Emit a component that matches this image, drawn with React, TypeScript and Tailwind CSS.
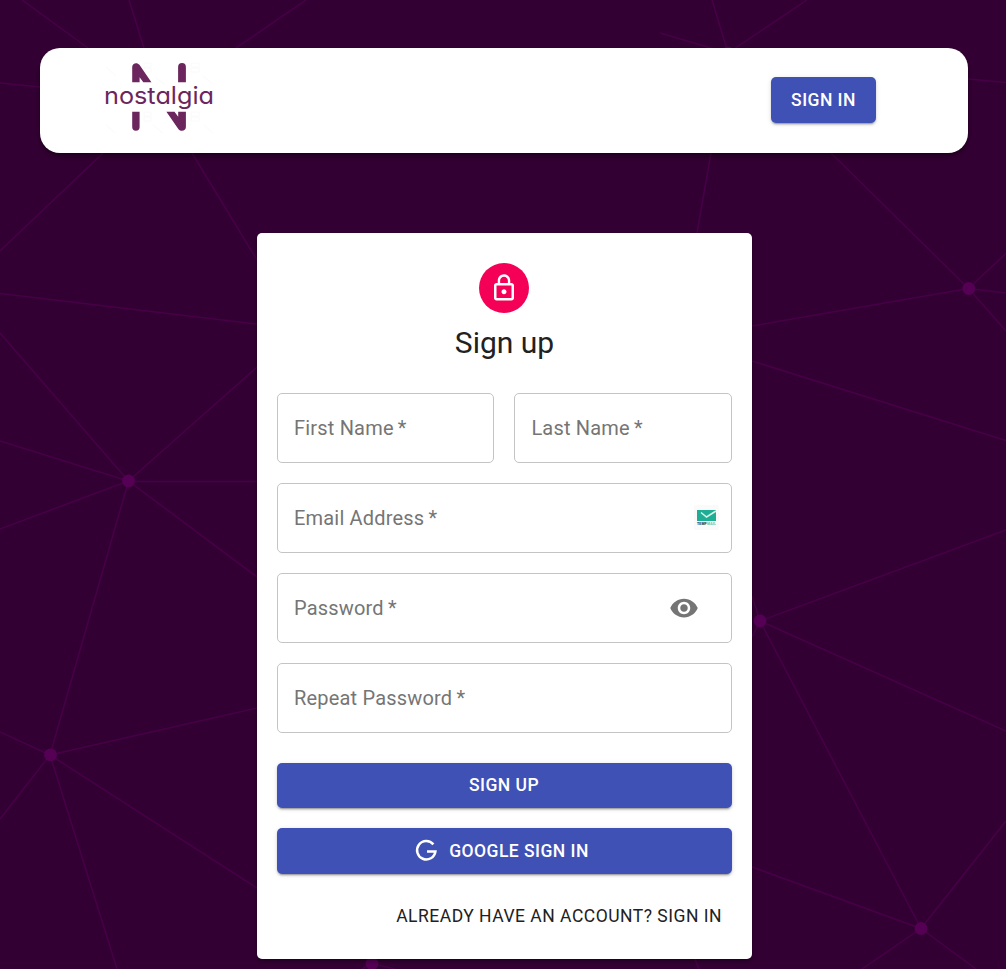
import React from "react";

const nodes = [
  [128.5, 481],
  [50.5, 754.8],
  [968.8, 288.5],
  [760, 621],
  [921, 928.5],
  [372, 963.5],
  [728, 53],
];

const lines = [
  [22, 0, 88, 48], [129, 0, 144, 48], [306, 0, 236, 48], [0, 83, 40, 87],
  [103, 153, 0, 251], [192, 153, 257, 260], [0, 293.5, 257, 324],
  [0, 333, 128.5, 481], [0, 441, 128.5, 481], [0, 529, 128.5, 481],
  [257, 367, 128.5, 481], [257, 481.5, 128.5, 481.5], [257, 577, 128.5, 481],
  [128.5, 481, 50, 755], [0, 732, 50, 755], [257, 708, 50, 755],
  [0, 819, 50, 755], [117, 969, 50, 755], [257, 888, 50, 755],
  [362, 969, 372, 963.5], [395, 969, 372, 963.5],
  [660, 33, 728, 53], [712, 0, 728, 53], [807, 0, 728, 53],
  [711, 153, 697, 233], [831, 153, 968.5, 288.5], [968, 79, 1006, 82.5],
  [1006, 253.5, 968.5, 288.5], [1006, 293, 968.5, 288.5], [1006, 331, 968.5, 288.5],
  [752, 326, 968.5, 288.5], [752, 361, 1006, 440.5], [1006, 530, 760, 621],
  [752, 596, 760, 621], [752, 637, 760, 621], [1006, 731, 760, 621],
  [760, 621, 921, 928.5], [752, 867, 921, 928.5], [1006, 821, 921, 928.5],
  [862, 969, 921, 928.5], [976, 969, 921, 928.5], [695, 959, 699, 969],
];

const raised =
  "shadow-[0_3px_1px_-2px_rgba(0,0,0,0.2),0_2px_2px_0_rgba(0,0,0,0.14),0_1px_5px_0_rgba(0,0,0,0.12)]";
const button = `flex items-center justify-center rounded-[5px] bg-[#3f51b5] text-[17.5px] leading-[30.6px] font-medium tracking-[0.026em] text-white uppercase ${raised}`;

function Network() {
  return (
    <svg className="absolute inset-0" width="1006" height="969" aria-hidden="true">
      {lines.map(([x1, y1, x2, y2], i) => (
        <line key={i} x1={x1} y1={y1} x2={x2} y2={y2} stroke="#470047" strokeWidth="1.5" />
      ))}
      {nodes.map(([cx, cy], i) => (
        <circle key={i} cx={cx} cy={cy} r="6.4" fill="#550055" />
      ))}
    </svg>
  );
}

function Logo() {
  return (
    <svg className="overflow-visible" width="124" height="80" viewBox="98 58 124 80">
      <g stroke="#fafafa" strokeWidth="1" fill="none">
        <path d="M106 67l10 9M155 77l10 8M203 76l10 8M106 125l9 8M153 125l10 8M204 125l9 8" />
        <path d="M144 63h7v4h-7zM144 68h7v4h-7zM191 63h8v4h-8zM191 68h8v4h-8zM144 112h7v4h-7zM144 117h7v4h-7zM191 112h8v4h-8zM191 117h8v4h-8z" />
      </g>
      <g fill="#6b265e">
        <path d="M132.2 82.3V67c0-4 5-5 7.2-2.2L151.4 82.3H143.3L139.6 77.3V82.3Z" />
        <path d="M178.1 82.3V67a3.9 3.9 0 0 1 7.8 0V82.3Z" />
        <path d="M132.2 111.7V127a3.7 3.7 0 0 0 7.4 0V111.7Z" />
        <path d="M166.4 111.7H174.5L178.2 116.7V111.7H185.9V127c0 4-5 5-7.4 2.2Z" />
      </g>
      <text
        x="104"
        y="103.5"
        textLength="110"
        lengthAdjust="spacingAndGlyphs"
        fill="#6b265e"
        className="font-['Inter',sans-serif] text-[24px] font-normal [font-feature-settings:'cv11','ss03']"
      >
        nostalgia
      </text>
    </svg>
  );
}

function Field({ label, children }: { label: string; children?: React.ReactNode }) {
  return (
    <div className="flex h-[70px] w-full items-center justify-between rounded-[5px] border border-[#c4c4c4] pl-4 text-[20px] tracking-[0.00938em] text-[#757575]">
      <span>
        {label}
        <span className="-ml-px">&nbsp;*</span>
      </span>
      {children}
    </div>
  );
}

export default function App() {
  return (
    <div className="relative h-[969px] w-[1006px] overflow-hidden bg-[#330033] font-['Roboto',sans-serif]">
      <Network />
      <div className="relative flex flex-col pt-12">
        <header className="ml-10 flex h-[105px] w-[928px] items-start justify-between rounded-[20px] bg-white pr-[92px] pl-[58px] shadow-[0_3px_4px_-1px_rgba(0,0,0,0.3),0_4px_6px_rgba(0,0,0,0.2)]">
          <div className="pt-[10px]">
            <Logo />
          </div>
          <button className={`${button} mt-[29px] h-[46px] w-[105px]`}>Sign in</button>
        </header>

        <main className="mt-20 ml-[257px] flex h-[726px] w-[495px] flex-col rounded-[5px] bg-white px-5 pt-[30px] shadow-[0_2px_4px_rgba(0,0,0,0.4)]">
          <div className="flex flex-col items-center">
            <div className="mr-px flex size-[50px] items-center justify-center rounded-full bg-[#f50057]">
              <svg width="30" height="30" viewBox="0 0 24 24" fill="#fff">
                <path d="M12 17c1.1 0 2-.9 2-2s-.9-2-2-2-2 .9-2 2 .9 2 2 2zm6-9h-1V6c0-2.76-2.24-5-5-5S7 3.24 7 6v2H6c-1.1 0-2 .9-2 2v10c0 1.1.9 2 2 2h12c1.1 0 2-.9 2-2V10c0-1.1-.9-2-2-2zM8.9 6c0-1.71 1.39-3.1 3.1-3.1s3.1 1.39 3.1 3.1v2H8.9V6zM18 20H6V10h12v10z" />
              </svg>
            </div>
            <h1 className="mt-[10px] text-[30px] leading-[40px] text-[#212121]">Sign up</h1>
          </div>

          <form className="mt-[30px] flex flex-col gap-5">
            <div className="grid grid-cols-[217.4px_217.6px] gap-5">
              <Field label="First Name" />
              <Field label="Last Name" />
            </div>
            <Field label="Email Address">
              <svg className="mr-3 mb-0.5" width="25" height="25" viewBox="0 0 25 25">
                <rect width="25" height="25" rx="2" fill="#fafafa" />
                <path d="M3 5h19v11H3z" fill="#1fae94" />
                <path d="M7 7.5l5.5 4.5L22 6" fill="none" stroke="#d5f2eb" strokeWidth="1.6" />
                <text x="3" y="19.8" fontSize="3.8" fontWeight="900" textLength="10" lengthAdjust="spacingAndGlyphs" fill="#273336">TEMP</text>
                <text x="13" y="19.8" fontSize="3.8" fontWeight="900" textLength="9" lengthAdjust="spacingAndGlyphs" fill="#55cdb5">MAIL</text>
              </svg>
            </Field>
            <Field label="Password">
              <svg className="mr-8" width="30" height="30" viewBox="0 0 24 24" fill="#757575">
                <path d="M12 4.5C7 4.5 2.73 7.61 1 12c1.73 4.39 6 7.5 11 7.5s9.27-3.11 11-7.5c-1.73-4.39-6-7.5-11-7.5zM12 17c-2.76 0-5-2.24-5-5s2.24-5 5-5 5 2.24 5 5-2.24 5-5 5zm0-8c-1.66 0-3 1.34-3 3s1.34 3 3 3 3-1.34 3-3-1.34-3-3-3z" />
              </svg>
            </Field>
            <Field label="Repeat Password" />
          </form>

          <button className={`${button} mt-[30px] h-[45px] w-full shrink-0 pr-px`}>Sign up</button>
          <button className={`${button} mt-5 h-[46px] w-full shrink-0 pr-[6px]`}>
            <svg className="mr-[10px]" width="25" height="25" viewBox="0 0 25 25" fill="none" stroke="#fff" strokeWidth="2.5">
              <path d="M19.4 5.4A9.2 9.2 0 1 0 21.4 12.6H13" />
            </svg>
            Google sign in
          </button>
          <a className="mt-[27px] mr-[10px] self-end text-[17.5px] leading-[31px] tracking-[0.02857em] text-[#212121] uppercase">
            Already have an account? Sign in
          </a>
        </main>
      </div>
    </div>
  );
}
